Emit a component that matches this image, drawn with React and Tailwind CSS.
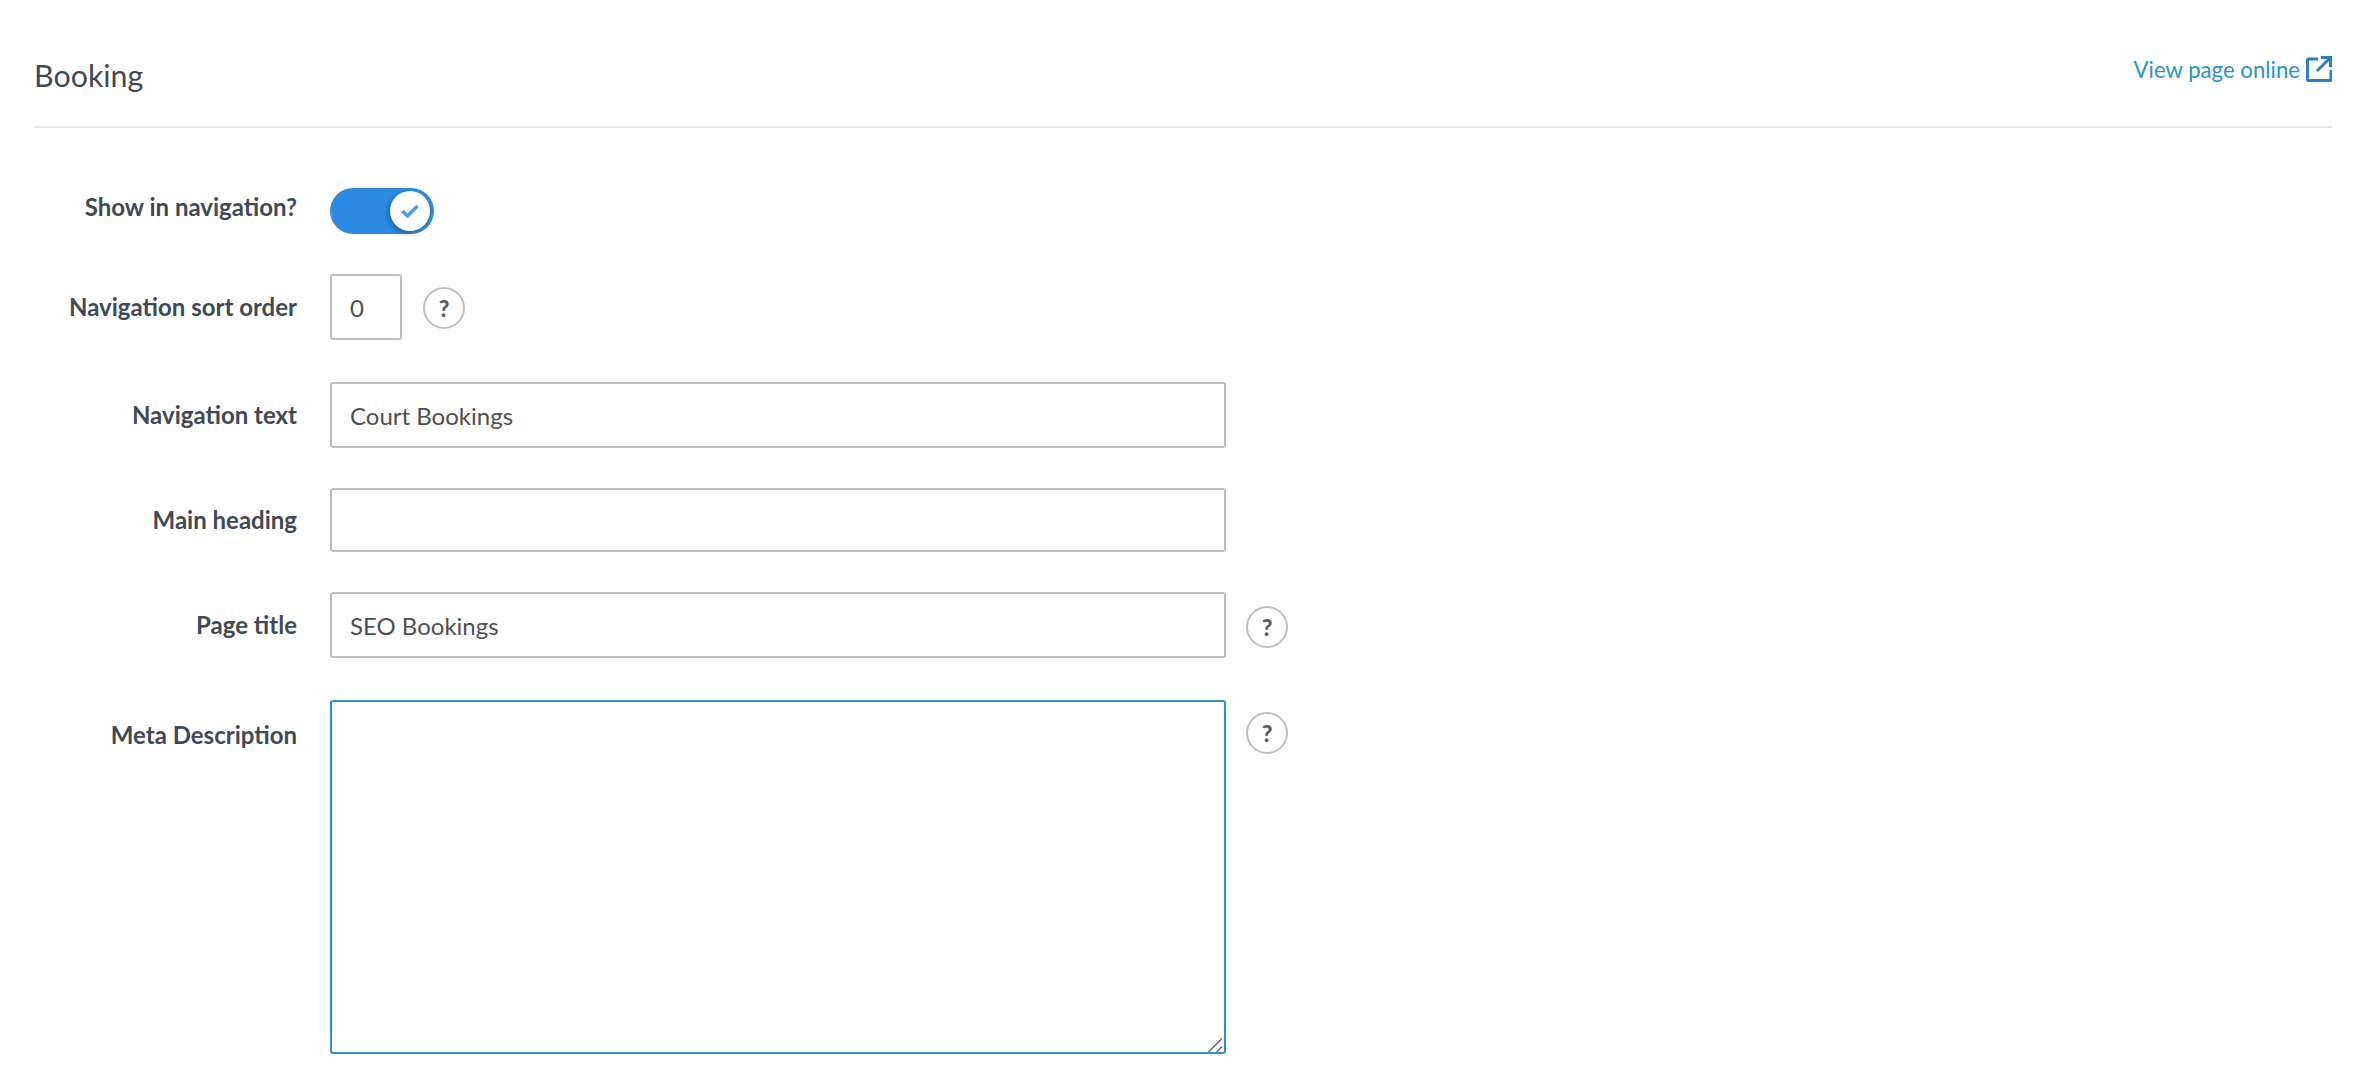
const fieldClass = "w-[896px] border-2 border-[#bdbdbd] rounded-[3px] bg-white px-[18px] text-[24px] text-[#4f4f4f] outline-none";

const HelpIcon = ({ className = "" }) => (
  <span className={"flex items-center justify-center w-[42px] h-[42px] rounded-full border-2 border-[#bfbfbf] text-[23px] font-black text-[#56606a] " + className}>
    ?
  </span>
);

const Row = ({ label, className = "", labelClass = "items-center", children }) => (
  <div className={"flex " + className}>
    <label className={"w-[263px] shrink-0 flex justify-end text-[24px] font-bold text-[#3f4a54] " + labelClass}>
      {label}
    </label>
    <div className="ml-[33px] flex items-start">{children}</div>
  </div>
);

const App = () => {
  return (
    <div className="min-h-[1080px] bg-white pl-[34px] pr-[38px] font-['Lato',sans-serif]">
      <header className="flex justify-between h-[128px] border-b-2 border-[#e3e7ea]">
        <h1 className="mt-[54px] text-[30.4px] leading-[42px] text-[#3f4a54]">Booking</h1>
        <a className="mt-[50px] h-[40px] flex items-start text-[22.2px] leading-[40px] text-[#2a94c8]" href="#">
          View page online
          <svg className="ml-[6px] mt-[6px]" width="26" height="26" viewBox="0 0 26 26" fill="none" stroke="#2a7fc9" strokeWidth="3">
            <path d="M12 3H2.500a1 1 0 0 0-1 1v19.500a1 1 0 0 0 1 1H24a1 1 0 0 0 1-1V14" />
            <path d="M11 15L23 3M15 1.500h9.500V11" />
          </svg>
        </a>
      </header>

      <Row label="Show in navigation?" className="mt-[60px] h-[46px]" labelClass="items-start pt-[1px]">
        <div className="flex justify-end items-center w-[104px] h-[46px] rounded-full bg-[#2b8ae2] pr-[4px]">
          <span className="flex items-center justify-center w-[40px] h-[40px] rounded-full bg-white shadow-[-2px_2px_5px_rgba(0,0,0,0.3)]">
            <svg width="18" height="14" viewBox="0 0 18 14" fill="none" stroke="#4a9bea" strokeWidth="3.5">
              <path d="M1.500 7l5 5L16.500 2" />
            </svg>
          </span>
        </div>
      </Row>

      <Row label="Navigation sort order" className="mt-[40px] h-[66px]">
        <input className="w-[72px] h-[66px] border-2 border-[#bdbdbd] rounded-[3px] bg-white px-[18px] text-[24px] text-[#4f4f4f] outline-none" defaultValue="0" />
        <HelpIcon className="ml-[21px] mt-[13px]" />
      </Row>

      <Row label="Navigation text" className="mt-[42px] h-[66px]">
        <input className={fieldClass + " h-[66px]"} defaultValue="Court Bookings" />
      </Row>

      <Row label="Main heading" className="mt-[40px] h-[64px]">
        <input className={fieldClass + " h-[64px]"} />
      </Row>

      <Row label="Page title" className="mt-[40px] h-[66px]">
        <input className={fieldClass + " h-[66px]"} defaultValue="SEO Bookings" />
        <HelpIcon className="ml-[20px] mt-[14px]" />
      </Row>

      <Row label="Meta Description" className="mt-[42px]" labelClass="items-start pt-[17px]">
        <div className="relative">
          <textarea className="block w-[896px] h-[354px] border-2 border-[#2a94c8] rounded-[3px] bg-white outline-none resize-none" />
          {/* resize grip, the native one comes out smaller */}
          <svg className="absolute right-[2px] bottom-[2px]" width="16" height="16" viewBox="0 0 16 16" fill="none" stroke="#6b6b6b" strokeWidth="1.5">
            <path d="M0.500 16L14 2.500M8.500 16L14 10.500" />
          </svg>
        </div>
        <HelpIcon className="ml-[20px] mt-[12px]" />
      </Row>
    </div>
  );
};

export default App;
